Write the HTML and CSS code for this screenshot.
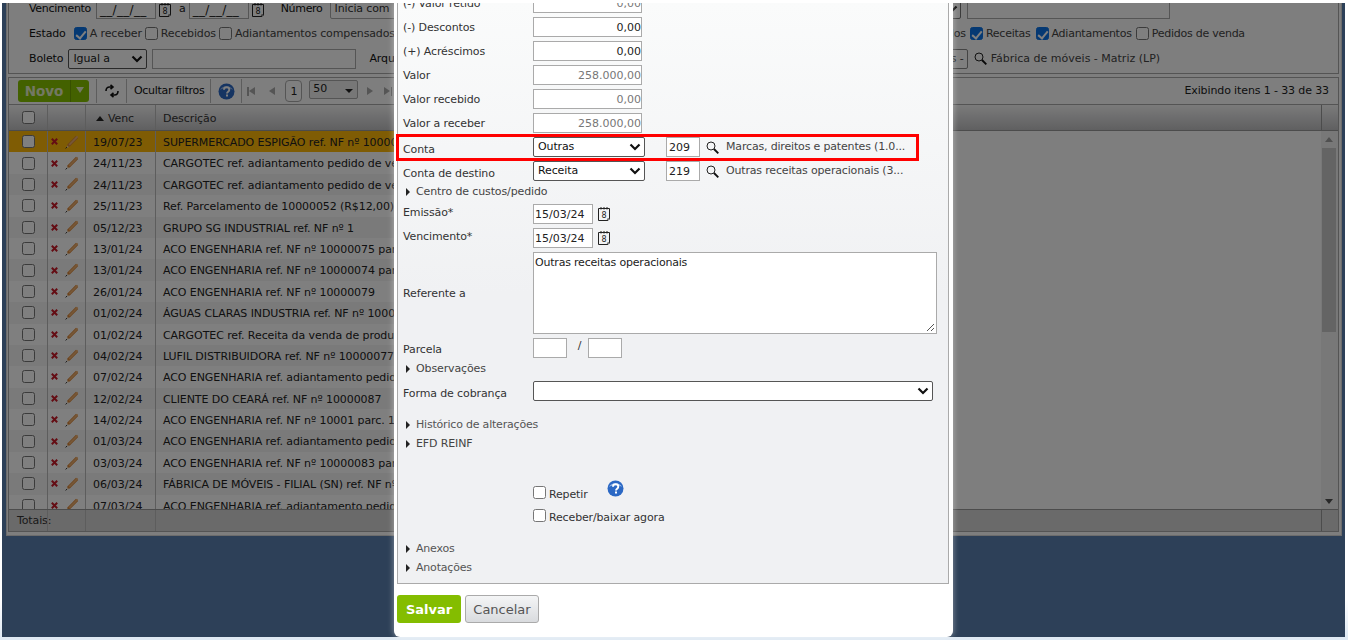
FILE: index.html
```html
<!DOCTYPE html>
<html lang="pt-BR">
<head>
<meta charset="utf-8">
<title>Contas a receber</title>
<link rel="stylesheet" href="styles.css">
</head>
<body>
<svg class="defs" width="0" height="0" aria-hidden="true">
  <defs>
    <symbol id="cal" viewBox="0 0 12 14">
      <path d="M.5 1.500h11v10.500l-1.500 1.500h-9.500z" fill="none" stroke="#222" stroke-width="1"/>
      <path d="M11.500 11.500l-2 .3-.2 1.700" fill="none" stroke="#555" stroke-width=".8"/>
      <path d="M3 0v2.500M6 0v2.500M9 0v2.500" stroke="#222" stroke-width="1"/>
      <text x="6" y="11" font-size="8" text-anchor="middle" fill="#222" font-family="DejaVu Sans, sans-serif">8</text>
    </symbol>
    <symbol id="mag" viewBox="0 0 13 13">
      <circle cx="5" cy="5" r="4" fill="none" stroke="#222" stroke-width="1"/>
      <path d="M8 8l4.300 4.300" stroke="#111" stroke-width="1.900"/>
    </symbol>
    <symbol id="del" viewBox="0 0 7 7">
      <path d="M.8.800l5.400 5.400M6.200.800L.8 6.200" stroke="#c81a28" stroke-width="2"/>
    </symbol>
    <symbol id="pen" viewBox="0 0 14 14">
      <path d="M11 .8l2.200 2.200-8.400 8.400-2.800.6.600-2.800z" fill="#d9873a"/>
      <path d="M12 .8l1.200 1.200-8.400 8.400-1.100-1.100z" fill="#eeb070"/>
      <path d="M2 12.600l.3-2 1.700 1.600z" fill="#f0dcc0"/>
      <path d="M.6 13.400l1.400-1.300" stroke="#333" stroke-width="1"/>
    </symbol>
    <symbol id="help" viewBox="0 0 17 17">
      <circle cx="8.500" cy="8.500" r="8" fill="#2b68c4"/>
      <path d="M2 7a7 6 0 0 1 13 0c-3-2.500-10-2.500-13 0z" fill="#8fb4ea"/>
      <path d="M6 6.700c0-3.200 5.300-3.200 5.300 0 0 2-2.300 2-2.300 3.800" fill="none" stroke="#fff" stroke-width="1.900"/>
      <rect x="8" y="11.500" width="2" height="2" fill="#fff"/>
    </symbol>
    <symbol id="chev" viewBox="0 0 12 8">
      <path d="M1.500 1.500l4.500 4.500 4.500-4.500" fill="none" stroke="#111" stroke-width="2.200"/>
    </symbol>
  </defs>
</svg>

<div class="screen">
  <div class="desk">
    <main class="panel">
      <section class="filters">
        <div class="frow frow-a">
          <span class="flabel">Vencimento</span>
          <span class="mask">__/__/__</span>
          <svg class="ic-cal"><use href="#cal"/></svg>
          <span class="sep">a</span>
          <span class="mask">__/__/__</span>
          <svg class="ic-cal"><use href="#cal"/></svg>
          <span class="flabel num">Número</span>
          <span class="fakeselect">Inicia com</span>
          <span class="tailsel"><svg class="chev"><use href="#chev"/></svg></span>
          <span class="tailinp"></span>
        </div>
        <div class="frow frow-b">
          <span class="flabel">Estado</span>
          <label class="chk"><i class="box on"></i>A receber</label>
          <label class="chk"><i class="box"></i>Recebidos</label>
          <label class="chk"><i class="box"></i>Adiantamentos compensados</label>
          <span class="tit">Títulos</span>
          <label class="chk c-rec"><i class="box on"></i>Receitas</label>
          <label class="chk c-adi"><i class="box on"></i>Adiantamentos</label>
          <label class="chk c-ped"><i class="box"></i>Pedidos de venda</label>
        </div>
        <div class="frow frow-c">
          <span class="flabel">Boleto</span>
          <span class="nsel">Igual a<svg class="chev"><use href="#chev"/></svg></span>
          <span class="ftext"></span>
          <span class="flabel arq">Arquivo</span>
          <span class="tailbox">Empresas -</span>
          <span class="company"><svg class="ic-mag"><use href="#mag"/></svg>Fábrica de móveis - Matriz (LP)</span>
        </div>
      </section>

      <section class="toolbar">
        <button type="button" class="novo"><span class="novo-t">Novo</span><span class="novo-a"></span></button>
        <span class="tdiv"></span>
        <svg class="refresh" viewBox="0 0 16 14"><path d="M2 7c0-2.500 1.500-4 3.500-4H8M6.500.8l2.500 2.200-2.500 2.200M14 7c0 2.500-1.500 4-3.500 4H8M9.500 8.800L7 11l2.500 2.200" fill="none" stroke="#111" stroke-width="1.600"/></svg>
        <span class="tdiv"></span>
        <span class="ttext">Ocultar filtros</span>
        <span class="tdiv"></span>
        <svg class="ic-help"><use href="#help"/></svg>
        <span class="tdiv thin"></span>
        <span class="pg first"></span>
        <span class="pg prev"></span>
        <span class="pageno">1</span>
        <span class="perpage">50<i></i></span>
        <span class="pg next"></span>
        <span class="pg last"></span>
        <span class="count">Exibindo itens 1 - 33 de 33</span>
      </section>

      <section class="grid">
        <div class="ghead">
          <span class="c1"><i class="box"></i></span>
          <span class="c2"></span>
          <span class="c3"><i class="sortup"></i>Venc</span>
          <span class="c4">Descrição</span>
          <span class="c5"></span>
        </div>
        <div class="gbody">
          <div class="rows">
            <div class="row sel"><span class="c1"><i class="box"></i></span><span class="c2"><svg class="ic-del"><use href="#del"/></svg><svg class="ic-pen"><use href="#pen"/></svg></span><span class="c3">19/07/23</span><span class="c4">SUPERMERCADO ESPIGÃO ref. NF nº 10000</span></div>
            <div class="row"><span class="c1"><i class="box"></i></span><span class="c2"><svg class="ic-del"><use href="#del"/></svg><svg class="ic-pen"><use href="#pen"/></svg></span><span class="c3">24/11/23</span><span class="c4">CARGOTEC ref. adiantamento pedido de venda</span></div>
            <div class="row alt"><span class="c1"><i class="box"></i></span><span class="c2"><svg class="ic-del"><use href="#del"/></svg><svg class="ic-pen"><use href="#pen"/></svg></span><span class="c3">24/11/23</span><span class="c4">CARGOTEC ref. adiantamento pedido de venda</span></div>
            <div class="row"><span class="c1"><i class="box"></i></span><span class="c2"><svg class="ic-del"><use href="#del"/></svg><svg class="ic-pen"><use href="#pen"/></svg></span><span class="c3">25/11/23</span><span class="c4">Ref. Parcelamento de 10000052 (R$12,00)</span></div>
            <div class="row alt"><span class="c1"><i class="box"></i></span><span class="c2"><svg class="ic-del"><use href="#del"/></svg><svg class="ic-pen"><use href="#pen"/></svg></span><span class="c3">05/12/23</span><span class="c4">GRUPO SG INDUSTRIAL ref. NF nº 1</span></div>
            <div class="row"><span class="c1"><i class="box"></i></span><span class="c2"><svg class="ic-del"><use href="#del"/></svg><svg class="ic-pen"><use href="#pen"/></svg></span><span class="c3">13/01/24</span><span class="c4">ACO ENGENHARIA ref. NF nº 10000075 parc.</span></div>
            <div class="row alt"><span class="c1"><i class="box"></i></span><span class="c2"><svg class="ic-del"><use href="#del"/></svg><svg class="ic-pen"><use href="#pen"/></svg></span><span class="c3">13/01/24</span><span class="c4">ACO ENGENHARIA ref. NF nº 10000074 parc.</span></div>
            <div class="row"><span class="c1"><i class="box"></i></span><span class="c2"><svg class="ic-del"><use href="#del"/></svg><svg class="ic-pen"><use href="#pen"/></svg></span><span class="c3">26/01/24</span><span class="c4">ACO ENGENHARIA ref. NF nº 10000079</span></div>
            <div class="row alt"><span class="c1"><i class="box"></i></span><span class="c2"><svg class="ic-del"><use href="#del"/></svg><svg class="ic-pen"><use href="#pen"/></svg></span><span class="c3">01/02/24</span><span class="c4">ÁGUAS CLARAS INDUSTRIA ref. NF nº 10000</span></div>
            <div class="row"><span class="c1"><i class="box"></i></span><span class="c2"><svg class="ic-del"><use href="#del"/></svg><svg class="ic-pen"><use href="#pen"/></svg></span><span class="c3">01/02/24</span><span class="c4">CARGOTEC ref. Receita da venda de produtos</span></div>
            <div class="row alt"><span class="c1"><i class="box"></i></span><span class="c2"><svg class="ic-del"><use href="#del"/></svg><svg class="ic-pen"><use href="#pen"/></svg></span><span class="c3">04/02/24</span><span class="c4">LUFIL DISTRIBUIDORA ref. NF nº 10000077</span></div>
            <div class="row"><span class="c1"><i class="box"></i></span><span class="c2"><svg class="ic-del"><use href="#del"/></svg><svg class="ic-pen"><use href="#pen"/></svg></span><span class="c3">07/02/24</span><span class="c4">ACO ENGENHARIA ref. adiantamento pedido</span></div>
            <div class="row alt"><span class="c1"><i class="box"></i></span><span class="c2"><svg class="ic-del"><use href="#del"/></svg><svg class="ic-pen"><use href="#pen"/></svg></span><span class="c3">12/02/24</span><span class="c4">CLIENTE DO CEARÁ ref. NF nº 10000087</span></div>
            <div class="row"><span class="c1"><i class="box"></i></span><span class="c2"><svg class="ic-del"><use href="#del"/></svg><svg class="ic-pen"><use href="#pen"/></svg></span><span class="c3">14/02/24</span><span class="c4">ACO ENGENHARIA ref. NF nº 10001 parc. 1/2</span></div>
            <div class="row alt"><span class="c1"><i class="box"></i></span><span class="c2"><svg class="ic-del"><use href="#del"/></svg><svg class="ic-pen"><use href="#pen"/></svg></span><span class="c3">01/03/24</span><span class="c4">ACO ENGENHARIA ref. adiantamento pedido</span></div>
            <div class="row"><span class="c1"><i class="box"></i></span><span class="c2"><svg class="ic-del"><use href="#del"/></svg><svg class="ic-pen"><use href="#pen"/></svg></span><span class="c3">03/03/24</span><span class="c4">ACO ENGENHARIA ref. NF nº 10000083 parc.</span></div>
            <div class="row alt"><span class="c1"><i class="box"></i></span><span class="c2"><svg class="ic-del"><use href="#del"/></svg><svg class="ic-pen"><use href="#pen"/></svg></span><span class="c3">06/03/24</span><span class="c4">FÁBRICA DE MÓVEIS - FILIAL (SN) ref. NF nº</span></div>
            <div class="row"><span class="c1"><i class="box"></i></span><span class="c2"><svg class="ic-del"><use href="#del"/></svg><svg class="ic-pen"><use href="#pen"/></svg></span><span class="c3">07/03/24</span><span class="c4">ACO ENGENHARIA ref. adiantamento pedido</span></div>
          </div>
          <div class="scroll">
            <i class="sc-up"></i>
            <i class="sc-thumb"></i>
            <i class="sc-down"></i>
          </div>
        </div>
        <div class="gfoot">
          <span class="c1 tot">Totais:</span>
          <span class="c2"></span>
          <span class="c3"></span>
          <span class="c4"></span>
          <span class="c5"></span>
        </div>
      </section>
    </main>
  </div>
  <div class="veil"></div>

  <div class="modal">
    <form class="form">
      <div class="line clipped"><label>(-) Valor retido</label><span class="inp money ro">0,00</span></div>
      <div class="line"><label>(-) Descontos</label><span class="inp money">0,00</span></div>
      <div class="line"><label>(+) Acréscimos</label><span class="inp money">0,00</span></div>
      <div class="line"><label>Valor</label><span class="inp money ro">258.000,00</span></div>
      <div class="line"><label>Valor recebido</label><span class="inp money ro">0,00</span></div>
      <div class="line"><label>Valor a receber</label><span class="inp money ro">258.000,00</span></div>
      <div class="line acct">
        <label class="low">Conta</label><span class="sel-box">Outras<svg class="chev"><use href="#chev"/></svg></span><span class="inp code">209</span><svg class="ic-mag"><use href="#mag"/></svg><span class="acct-t">Marcas, direitos e patentes (1.0...</span>
        <div class="mark"></div>
      </div>
      <div class="line acct">
        <label class="low">Conta de destino</label><span class="sel-box">Receita<svg class="chev"><use href="#chev"/></svg></span><span class="inp code">219</span><svg class="ic-mag"><use href="#mag"/></svg><span class="acct-t">Outras receitas operacionais (3...</span>
      </div>
      <div class="fold f-centro"><i class="tri"></i>Centro de custos/pedido</div>
      <div class="line dline first-d"><label class="up">Emissão*</label><span class="inp date">15/03/24</span><svg class="ic-cal"><use href="#cal"/></svg></div>
      <div class="line dline"><label class="up">Vencimento*</label><span class="inp date">15/03/24</span><svg class="ic-cal"><use href="#cal"/></svg></div>
      <div class="line tline"><label>Referente a</label><span class="area">Outras receitas operacionais<svg class="grip" viewBox="0 0 9 9"><path d="M8 1L1 8M8 5L5 8" stroke="#555" stroke-width="1"/></svg></span></div>
      <div class="line pline"><label class="low">Parcela</label><span class="inp part"></span><span class="slash">/</span><span class="inp part"></span></div>
      <div class="fold f-obs"><i class="tri"></i>Observações</div>
      <div class="line fline"><label class="low">Forma de cobrança</label><span class="sel-box wide"><svg class="chev"><use href="#chev"/></svg></span></div>
      <div class="fold f-hist muted"><i class="tri"></i>Histórico de alterações</div>
      <div class="fold f-efd"><i class="tri"></i>EFD REINF</div>
      <div class="checks">
        <label class="mchk c-rep"><i class="box"></i>Repetir<svg class="ic-help"><use href="#help"/></svg></label>
        <label class="mchk"><i class="box"></i>Receber/baixar agora</label>
      </div>
      <div class="fold muted"><i class="tri"></i>Anexos</div>
      <div class="fold muted"><i class="tri"></i>Anotações</div>
    </form>
    <div class="actions">
      <button type="button" class="save">Salvar</button>
      <button type="button" class="cancel">Cancelar</button>
    </div>
  </div>
</div>
</body>
</html>
```
FILE: styles.css
```css
* { box-sizing: border-box; }
html, body { margin: 0; height: 100%; }
body { background: #fff; font: 11px/14px "DejaVu Sans", Verdana, sans-serif; letter-spacing: -.12px; color: #222; overflow: hidden; }
.defs { position: absolute; }
.box { display: inline-block; width: 13px; height: 13px; border: 1px solid #767676; border-radius: 2.500px; background: #fff; flex: none; }
.box.on { background: #0a72e6; border-color: #0a72e6; position: relative; }
.box.on::after { content: ""; position: absolute; left: 3.500px; top: .5px; width: 4px; height: 8px; border: solid #fff; border-width: 0 2px 2px 0; transform: rotate(40deg); }
.chev { width: 12px; height: 8px; flex: none; }
.ic-cal { width: 12px; height: 14px; flex: none; }
.ic-mag { width: 13px; height: 13px; flex: none; }
.ic-help { width: 17px; height: 17px; flex: none; }

.screen { position: relative; height: 640px; padding: 3px 3px 3px 2px; overflow: hidden; background: linear-gradient(#fff 600px, #dfe9f3 637px); }
.desk { height: 634px; background: #5a80b0; padding: 0 3px 0 4px; }
.panel { height: 533px; background: #fcfcfc; border: 1px solid #d8d8d8; border-top: 0; padding: 0 2px 3px 1px; display: flex; flex-direction: column; }
.veil { position: absolute; left: 2px; top: 3px; right: 3px; bottom: 3px; background: rgba(0, 0, 0, .5); }

.filters { height: 71px; border: 1px solid #a8a8a8; border-top: 0; padding-left: 20px; flex: none; overflow: hidden; margin-bottom: 3px; }
.frow { display: flex; align-items: center; white-space: nowrap; }
.frow-a { height: 18px; margin-top: -3px; }
.frow-b { height: 25px; margin-top: 3px; }
.frow-c { height: 25px; }
.flabel { color: #111; }
.frow-a .flabel { margin-right: 5px; letter-spacing: -.3px; }
.mask { width: 60px; height: 19px; border: 1px solid #aaa; background: #fff; padding-left: 3px; line-height: 18px; margin-right: 3px; font-size: 12px; letter-spacing: .3px; flex: none; }
.frow-a .ic-cal { margin-right: 8px; margin-top: 1px; }
.mask + .ic-cal + .sep { margin-right: 3px; }
.mask + .ic-cal + .num { margin-left: 9px; }
.fakeselect { width: 80px; height: 19px; border: 1px solid #aaa; background: #fff; padding-left: 4px; border-radius: 2px; color: #333; margin-left: 2px; line-height: 15px; flex: none; }
.tailsel { width: 111px; height: 19px; margin-left: 440px; border: 1px solid #777; border-radius: 2px; background: #fff; display: flex; justify-content: flex-end; align-items: center; padding-right: 2px; flex: none; }
.tailinp { width: 203px; height: 19px; margin-left: 6px; border: 1px solid #aaa; background: #fff; flex: none; }
.frow-b .flabel { margin-right: 8px; }
.chk { display: inline-flex; align-items: center; gap: 3px; color: #444; margin-right: 3px; }
.tit { width: 36px; text-align: right; margin-left: 532px; margin-right: 4px; color: #444; flex: none; }
.c-rec { margin-right: 5px; letter-spacing: -.25px; }
.c-adi { margin-right: 4px; letter-spacing: -.25px; }
.c-ped { letter-spacing: -.25px; }
.frow-c .flabel { margin-right: 5px; }
.nsel { width: 79px; height: 20px; border: 1px solid #555; border-radius: 2px; background: #fff; display: flex; align-items: center; justify-content: space-between; padding: 0 3px 0 4px; flex: none; }
.ftext { width: 204px; height: 20px; border: 1px solid #aaa; background: #fff; margin-left: 5px; flex: none; }
.frow-c .arq { margin-left: 13px; margin-right: 0; }
.tailbox { width: 100px; height: 20px; margin-left: 457px; border: 1px solid #888; border-radius: 2px; background: #fff; text-align: right; line-height: 18px; padding-right: 3px; color: #444; flex: none; }
.company { margin-left: 6px; display: flex; align-items: center; gap: 4px; color: #444; letter-spacing: 0; }

.toolbar { height: 28px; border: 1px solid #a8a8a8; display: flex; align-items: center; padding-left: 9px; flex: none; background: #fcfcfc; }
.novo { width: 71px; height: 22px; border: 0; border-radius: 3px; padding: 0; background: #86c300; display: flex; align-items: center; font: bold 13.500px "DejaVu Sans", sans-serif; }
.novo-t { flex: 1; text-align: center; color: #e6f0c8; }
.novo-a { width: 19px; height: 22px; border-left: 1px solid #6ea000; position: relative; }
.novo-a::after { content: ""; position: absolute; left: 5px; top: 7px; border: 4px solid transparent; border-top: 6px solid #e6f0c8; border-bottom: 0; }
.tdiv { width: 1px; height: 24px; background: #bbb; flex: none; }
.novo + .tdiv { margin-left: 7px; margin-right: 7px; }
.refresh { width: 16px; height: 14px; flex: none; }
.refresh + .tdiv { margin-left: 6px; margin-right: 7px; }
.ttext { color: #111; letter-spacing: -.3px; }
.ttext + .tdiv { margin-left: 6px; margin-right: 7px; }
.tdiv.thin { margin-left: 6px; margin-right: 5px; background: #bbb; }
.pg { width: 8px; height: 9px; flex: none; position: relative; }
.first { margin-right: 13px; }
.prev { margin-right: 9px; }
.next { margin-right: 10px; }
.pg::after { content: ""; position: absolute; top: 0; border: 4.500px solid transparent; }
.first::before { content: ""; position: absolute; left: 0; top: 0; width: 1.500px; height: 9px; background: #aaa; }
.first::after { left: 2px; border-right: 6px solid #aaa; border-left: 0; }
.prev::after { left: 1px; border-right: 6px solid #aaa; border-left: 0; }
.next::after { left: 1px; border-left: 6px solid #aaa; border-right: 0; }
.last::before { content: ""; position: absolute; right: 0; top: 0; width: 1.500px; height: 9px; background: #aaa; }
.last::after { left: 0; border-left: 6px solid #aaa; border-right: 0; }
.pageno { width: 17px; height: 22px; border: 1px solid #aaa; border-radius: 4px; background: #fff; text-align: center; line-height: 21px; margin-right: 7px; flex: none; }
.perpage { width: 49px; height: 19px; border: 1px solid #aaa; border-radius: 2px; background: #eee; padding-left: 3px; line-height: 15px; position: relative; margin: -3px 8px 0 0; flex: none; }
.perpage i { position: absolute; right: 4px; top: 8px; border: 4px solid transparent; border-top: 4px solid #222; border-bottom: 0; }
.count { margin-left: auto; margin-right: 9px; color: #222; }

.grid { flex: 1; min-height: 0; border: 1px solid #a8a8a8; border-top: 0; display: flex; flex-direction: column; }
.c1 { width: 38px; flex: none; display: flex; justify-content: center; align-items: center; }
.c2 { width: 38px; flex: none; display: flex; align-items: center; padding-left: 3px; gap: 7px; border-left: 1px solid #bbb; }
.c3 { width: 70px; flex: none; padding-left: 7px; border-left: 1px solid #bbb; white-space: nowrap; }
.c4 { flex: 1; padding-left: 7px; border-left: 1px solid #bbb; white-space: nowrap; overflow: hidden; letter-spacing: -.08px; }
.c5 { width: 17px; flex: none; border-left: 1px solid #999; }
.ghead { height: 26px; display: flex; align-items: center; flex: none; background: linear-gradient(#f6f6f6, #c0c0c2); border-bottom: 1px solid #999; color: #333; }
.ghead > span { height: 100%; display: flex; align-items: center; }
.ghead .c3, .ghead .c4 { padding-top: 2px; }
.sortup { display: inline-block; border: 4px solid transparent; border-bottom: 5px solid #222; border-top: 0; margin-right: 4px; margin-left: 3px; }
.gbody { flex: 1; min-height: 0; display: flex; overflow: hidden; }
.rows { flex: 1; min-width: 0; }
.row { width: 700px; height: 21.400px; display: flex; align-items: stretch; line-height: 23px; background: #fff; }
.row.alt { background: #f4f4f4; }
.row.sel { background: #ffb808; }
.row .c3 { letter-spacing: 0; }
.ic-del { width: 7px; height: 7px; flex: none; }
.ic-pen { width: 14px; height: 14px; flex: none; }
.scroll { width: 17px; flex: none; background: #f1f1f1; position: relative; }
.sc-up, .sc-down { position: absolute; left: 4px; border: 4px solid transparent; }
.sc-up { top: 6px; border-bottom: 5px solid #a0a0a0; border-top: 0; }
.sc-down { bottom: 5px; border-top: 5px solid #505050; border-bottom: 0; }
.sc-thumb { position: absolute; left: 1px; top: 17px; width: 14px; height: 184px; background: #c8c8c8; }
.gfoot { height: 22px; flex: none; display: flex; background: #d4d4d4; border-top: 1px solid #999; line-height: 21px; color: #333; }
.gfoot span { height: 100%; }
.gfoot .tot { justify-content: flex-start; padding-left: 8px; white-space: nowrap; }

.modal { position: absolute; left: 394px; top: 3px; width: 559px; height: 634px; background: #fff; border-radius: 0 0 6px 6px; box-shadow: 0 0 6px rgba(255, 255, 255, .45); padding: 0 4px 0 3px; overflow: hidden; }
.form { display: flow-root; height: 581px; background: linear-gradient(#fafbfb, #f0f1f3 50%); border: 1px solid #aaa; border-top: 0; padding-left: 5px; color: #333; }
.line { display: flex; align-items: center; height: 24px; position: relative; }
.line label { width: 130px; flex: none; padding-top: 2px; }
.clipped { margin-top: -12px; }
.inp { display: block; height: 20px; border: 1px solid #aaa; background: #fff; line-height: 20px; flex: none; color: #222; letter-spacing: 0; }
.money { width: 109px; text-align: right; }
.money.ro { color: #777; }
.low { position: relative; top: 2px; }
.up { position: relative; top: -2px; }
.pline .low { top: 1px; }
.sel-box { width: 112px; height: 20px; border: 1px solid #555; border-radius: 2px; background: #fff; display: flex; align-items: center; justify-content: space-between; padding: 0 3px 0 4px; color: #111; flex: none; }
.code { width: 34px; margin-left: 21px; padding-left: 2px; }
.acct .ic-mag { margin-left: 6px; }
.acct-t { margin-left: 7px; color: #444; white-space: nowrap; letter-spacing: -.17px; }
.mark { position: absolute; left: -7px; top: -1px; width: 523px; height: 27px; border: 3px solid #f00; }
.fold { display: flex; align-items: center; color: #444; height: 19px; padding-left: 3px; padding-top: 2px; }
.fold.muted { color: #555; letter-spacing: -.2px; }
.tri { width: 0; height: 0; border: 4px solid transparent; border-left: 4px solid #222; border-right: 0; margin-right: 6px; }
.f-centro { height: 14px; margin-top: 1px; }
.first-d { margin-top: 4px; }
.dline .date { width: 60px; padding-left: 1px; }
.dline .ic-cal { margin-left: 5px; }
.tline { height: 82px; margin-top: 2px; }
.area { width: 404px; height: 82px; border: 1px solid #aaa; background: #fff; display: block; padding: 3px 1px; position: relative; color: #222; letter-spacing: -.2px; }
.grip { position: absolute; right: 1px; bottom: 1px; width: 9px; height: 9px; }
.pline { height: 20px; margin-top: 4px; }
.part { width: 34px; }
.slash { width: 21px; padding-left: 4px; text-align: center; color: #333; position: relative; top: -2px; }
.fline { margin-top: 2px; }
.fline .wide { width: 400px; justify-content: flex-end; }
.f-hist { margin-top: 11px; }
.checks { margin-left: 130px; padding-top: 29px; height: 86px; }
.mchk { display: flex; align-items: center; gap: 3px; height: 23px; padding-top: 4px; color: #333; position: relative; letter-spacing: -.15px; }
.mchk .box { margin-bottom: 5px; }
.c-rep .ic-help { position: absolute; left: 74px; top: -1px; }
.actions { display: flex; gap: 4px; padding-top: 11px; }
.save { width: 64px; height: 28px; border: 0; border-radius: 3px; background: #84bd00; color: #fff; font: bold 13px "DejaVu Sans", sans-serif; padding: 0; }
.cancel { width: 74px; height: 28px; border: 1px solid #aaa; border-radius: 3px; background: linear-gradient(#f4f5f6, #d9dbde); color: #555; font: 13px "DejaVu Sans", sans-serif; padding: 0; }
```
